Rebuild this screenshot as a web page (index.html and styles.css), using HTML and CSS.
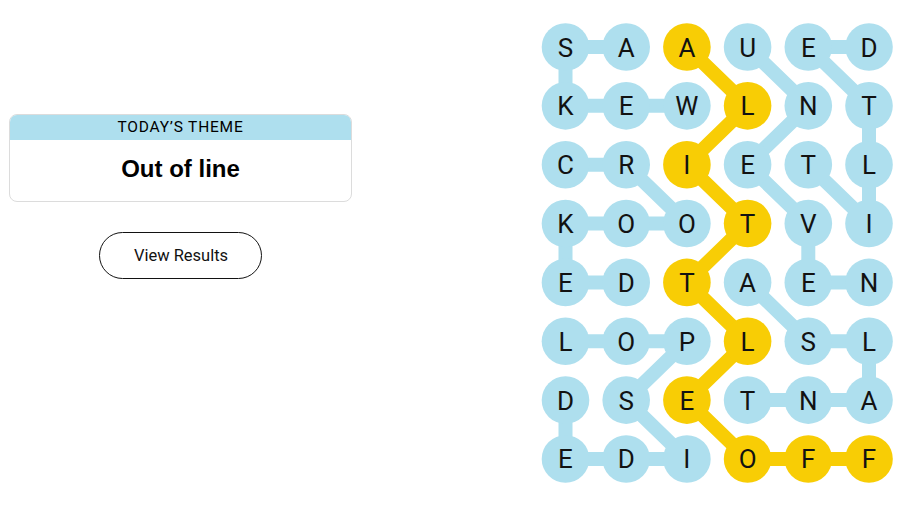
FILE: index.html
```html
<!DOCTYPE html>
<html lang="en">
<head>
<meta charset="utf-8">
<title>Strands</title>
<link rel="stylesheet" href="styles.css">
</head>
<body>
<main class="page">
  <section class="side">
    <div class="theme-card">
      <div class="theme-head">TODAY’S THEME</div>
      <div class="theme-body">Out of line</div>
    </div>
    <button class="results-btn" type="button">View Results</button>
  </section>
  <section class="board">
    <svg class="grid" width="368" height="508" viewBox="0 0 368 508" xmlns="http://www.w3.org/2000/svg">
      <g transform="translate(29.5,47)">
        <g class="links">
          <polyline class="link" points="60.7,0 0,0 0,58.85 60.7,58.85 121.4,58.85"/>
          <polyline class="link" points="182.1,0 242.8,58.85 182.1,117.7 242.8,176.55 242.8,235.4 303.5,235.4"/>
          <polyline class="link" points="242.8,117.7 303.5,176.55 303.5,117.7 303.5,58.85 242.8,0 303.5,0"/>
          <polyline class="link" points="0,117.7 60.7,117.7 121.4,176.55 60.7,176.55 0,176.55 0,235.4 60.7,235.4"/>
          <polyline class="link" points="182.1,235.4 242.8,294.25 303.5,294.25 303.5,353.1 242.8,353.1 182.1,353.1"/>
          <polyline class="link" points="0,294.25 60.7,294.25 121.4,294.25 60.7,353.1 121.4,411.95 60.7,411.95 0,411.95 0,353.1"/>
          <polyline class="link span" points="121.4,0 182.1,58.85 121.4,117.7 182.1,176.55 121.4,235.4 182.1,294.25 121.4,353.1 182.1,411.95 242.8,411.95 303.5,411.95"/>
        </g>
        <g class="dots">
          <circle cx="0" cy="0" r="23.8"/><circle cx="60.7" cy="0" r="23.8"/><circle class="span" cx="121.4" cy="0" r="23.8"/><circle cx="182.1" cy="0" r="23.8"/><circle cx="242.8" cy="0" r="23.8"/><circle cx="303.5" cy="0" r="23.8"/>
          <circle cx="0" cy="58.85" r="23.8"/><circle cx="60.7" cy="58.85" r="23.8"/><circle cx="121.4" cy="58.85" r="23.8"/><circle class="span" cx="182.1" cy="58.85" r="23.8"/><circle cx="242.8" cy="58.85" r="23.8"/><circle cx="303.5" cy="58.85" r="23.8"/>
          <circle cx="0" cy="117.7" r="23.8"/><circle cx="60.7" cy="117.7" r="23.8"/><circle class="span" cx="121.4" cy="117.7" r="23.8"/><circle cx="182.1" cy="117.7" r="23.8"/><circle cx="242.8" cy="117.7" r="23.8"/><circle cx="303.5" cy="117.7" r="23.8"/>
          <circle cx="0" cy="176.55" r="23.8"/><circle cx="60.7" cy="176.55" r="23.8"/><circle cx="121.4" cy="176.55" r="23.8"/><circle class="span" cx="182.1" cy="176.55" r="23.8"/><circle cx="242.8" cy="176.55" r="23.8"/><circle cx="303.5" cy="176.55" r="23.8"/>
          <circle cx="0" cy="235.4" r="23.8"/><circle cx="60.7" cy="235.4" r="23.8"/><circle class="span" cx="121.4" cy="235.4" r="23.8"/><circle cx="182.1" cy="235.4" r="23.8"/><circle cx="242.8" cy="235.4" r="23.8"/><circle cx="303.5" cy="235.4" r="23.8"/>
          <circle cx="0" cy="294.25" r="23.8"/><circle cx="60.7" cy="294.25" r="23.8"/><circle cx="121.4" cy="294.25" r="23.8"/><circle class="span" cx="182.1" cy="294.25" r="23.8"/><circle cx="242.8" cy="294.25" r="23.8"/><circle cx="303.5" cy="294.25" r="23.8"/>
          <circle cx="0" cy="353.1" r="23.8"/><circle cx="60.7" cy="353.1" r="23.8"/><circle class="span" cx="121.4" cy="353.1" r="23.8"/><circle cx="182.1" cy="353.1" r="23.8"/><circle cx="242.8" cy="353.1" r="23.8"/><circle cx="303.5" cy="353.1" r="23.8"/>
          <circle cx="0" cy="411.95" r="23.8"/><circle cx="60.7" cy="411.95" r="23.8"/><circle cx="121.4" cy="411.95" r="23.8"/><circle class="span" cx="182.1" cy="411.95" r="23.8"/><circle class="span" cx="242.8" cy="411.95" r="23.8"/><circle class="span" cx="303.5" cy="411.95" r="23.8"/>
        </g>
        <g class="letters">
          <text x="0" y="9.5">S</text><text x="60.7" y="9.5">A</text><text x="121.4" y="9.5">A</text><text x="182.1" y="9.5">U</text><text x="242.8" y="9.5">E</text><text x="303.5" y="9.5">D</text>
          <text x="0" y="68.35">K</text><text x="60.7" y="68.35">E</text><text x="121.4" y="68.35">W</text><text x="182.1" y="68.35">L</text><text x="242.8" y="68.35">N</text><text x="303.5" y="68.35">T</text>
          <text x="0" y="127.2">C</text><text x="60.7" y="127.2">R</text><text x="121.4" y="127.2">I</text><text x="182.1" y="127.2">E</text><text x="242.8" y="127.2">T</text><text x="303.5" y="127.2">L</text>
          <text x="0" y="186.05">K</text><text x="60.7" y="186.05">O</text><text x="121.4" y="186.05">O</text><text x="182.1" y="186.05">T</text><text x="242.8" y="186.05">V</text><text x="303.5" y="186.05">I</text>
          <text x="0" y="244.9">E</text><text x="60.7" y="244.9">D</text><text x="121.4" y="244.9">T</text><text x="182.1" y="244.9">A</text><text x="242.8" y="244.9">E</text><text x="303.5" y="244.9">N</text>
          <text x="0" y="303.75">L</text><text x="60.7" y="303.75">O</text><text x="121.4" y="303.75">P</text><text x="182.1" y="303.75">L</text><text x="242.8" y="303.75">S</text><text x="303.5" y="303.75">L</text>
          <text x="0" y="362.6">D</text><text x="60.7" y="362.6">S</text><text x="121.4" y="362.6">E</text><text x="182.1" y="362.6">T</text><text x="242.8" y="362.6">N</text><text x="303.5" y="362.6">A</text>
          <text x="0" y="421.45">E</text><text x="60.7" y="421.45">D</text><text x="121.4" y="421.45">I</text><text x="182.1" y="421.45">O</text><text x="242.8" y="421.45">F</text><text x="303.5" y="421.45">F</text>
        </g>
      </g>
    </svg>
  </section>
</main>
</body>
</html>
```

FILE: styles.css
```css
html, body {
  margin: 0;
  padding: 0;
  background: #ffffff;
}

body {
  font-family: "Liberation Sans", Arial, sans-serif;
  color: #000000;
}

.page {
  display: flex;
  width: 904px;
  height: 508px;
  overflow: hidden;
}

.side {
  width: 343px;
  margin-left: 9px;
  padding-top: 114px;
  display: flex;
  flex-direction: column;
  align-items: center;
}

.theme-card {
  width: 343px;
  box-sizing: border-box;
  border: 1px solid #dcdcdc;
  border-radius: 8px;
  overflow: hidden;
  display: flex;
  flex-direction: column;
}

.theme-head {
  background: #aedfee;
  height: 26px;
  margin: -1px -1px 0;
  display: flex;
  align-items: center;
  justify-content: center;
  font-family: Roboto, "Liberation Sans", Arial, sans-serif;
  font-weight: 400;
  font-size: 15.5px;
  letter-spacing: 0.8px;
  color: #000000;
}

.theme-body {
  height: 61px;
  padding-bottom: 3px;
  box-sizing: border-box;
  display: flex;
  align-items: center;
  justify-content: center;
  font-size: 24px;
  font-weight: 700;
  color: #000000;
}

.results-btn {
  margin-top: 30px;
  width: 163px;
  height: 47px;
  box-sizing: border-box;
  border: 1px solid #121212;
  border-radius: 24px;
  background: #ffffff;
  font-family: Roboto, "Liberation Sans", Arial, sans-serif;
  font-size: 16.5px;
  color: #121212;
  padding: 0 0 0 1px;
}

.board {
  margin-left: auto;
  width: 368px;
}

.grid {
  display: block;
}

.link {
  fill: none;
  stroke: #aedfee;
  stroke-width: 14;
  stroke-linejoin: round;
  stroke-linecap: round;
}

.link.span {
  stroke: #f8cd05;
}

.dots circle {
  fill: #aedfee;
}

.dots circle.span {
  fill: #f8cd05;
}

.letters text {
  font-family: Roboto, "Liberation Sans", Arial, sans-serif;
  font-size: 26px;
  text-anchor: middle;
  fill: #121212;
}
```
